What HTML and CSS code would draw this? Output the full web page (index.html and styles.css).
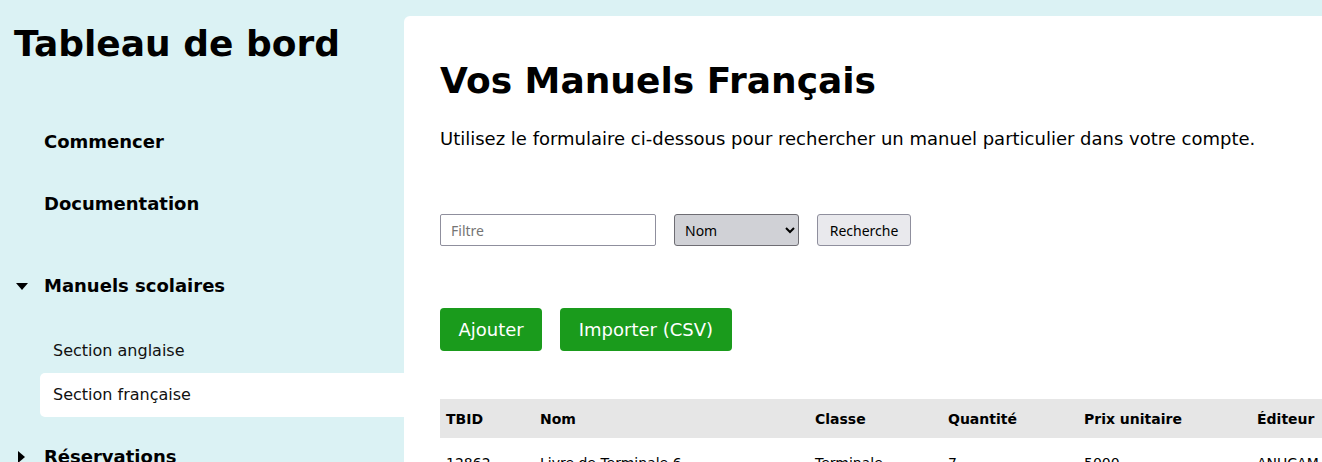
FILE: index.html
```html
<!DOCTYPE html>
<html lang="fr">
<head>
  <meta charset="UTF-8" />
  <title>Tableau de bord</title>
  <link rel="stylesheet" href="styles.css">
</head>
<body>

  <aside class="sidebar">
    <h1 class="brand">Tableau de bord</h1>
    <nav class="menu">
      <a class="menu-link" href="#">Commencer</a>
      <a class="menu-link" href="#">Documentation</a>

      <div class="menu-group">
        <a class="menu-link menu-toggle open" href="#"><span class="caret"></span>Manuels scolaires</a>
        <div class="submenu">
          <a class="submenu-link" href="#">Section anglaise</a>
          <a class="submenu-link active" href="#">Section française</a>
        </div>
      </div>

      <a class="menu-link menu-toggle closed" href="#"><span class="caret"></span>Réservations</a>
    </nav>
  </aside>

  <main class="content">
    <h1 class="title">Vos Manuels Français</h1>
    <p class="lead">Utilisez le formulaire ci-dessous pour rechercher un manuel particulier dans votre compte.</p>

    <form class="search">
      <input class="field" type="text" placeholder="Filtre">
      <select class="picker">
        <option>Nom</option>
        <option>Classe</option>
        <option>Éditeur</option>
      </select>
      <button class="btn-search" type="button">Recherche</button>
    </form>

    <div class="actions">
      <button class="btn-green" type="button">Ajouter</button>
      <button class="btn-green" type="button">Importer (CSV)</button>
    </div>

    <table class="books">
      <colgroup>
        <col style="width:94px">
        <col style="width:275px">
        <col style="width:133px">
        <col style="width:136px">
        <col style="width:173px">
        <col style="width:160px">
      </colgroup>
      <thead>
        <tr>
          <th>TBID</th>
          <th>Nom</th>
          <th>Classe</th>
          <th>Quantité</th>
          <th>Prix unitaire</th>
          <th>Éditeur</th>
        </tr>
      </thead>
      <tbody>
        <tr>
          <td>12862</td>
          <td>Livre de Terminale 6</td>
          <td>Terminale</td>
          <td>7</td>
          <td>5000</td>
          <td>ANUCAM</td>
        </tr>
      </tbody>
    </table>
  </main>

</body>
</html>
```

FILE: styles.css
```css
body {
  font-family: 'DejaVu Sans', sans-serif;
  background-color: #dbf2f4;
  color: #000;
  margin: 0;
  display: flex;
  height: 462px;
  overflow: hidden;
}

.sidebar {
  flex: none;
  width: 404px;
}
.brand {
  font-size: 36px;
  margin: 23px 0 0;
  padding-left: 14px;
}
.menu {
  margin-top: 47px;
}
.menu-link {
  display: flex;
  align-items: center;
  padding: 20px 0 20px 44px;
  line-height: 22px;
  font-size: 18px;
  font-weight: bold;
  color: #000;
  text-decoration: none;
  position: relative;
}
.menu-group {
  margin-top: 20px;
}
.caret {
  position: absolute;
  left: 16px;
  top: 50%;
  width: 0;
  height: 0;
}
.open .caret {
  margin-top: -3px;
  border-left: 6px solid transparent;
  border-right: 6px solid transparent;
  border-top: 7px solid #000;
}
.closed .caret {
  left: 18px;
  margin-top: -6px;
  border-top: 6px solid transparent;
  border-bottom: 6px solid transparent;
  border-left: 7px solid #000;
}
.submenu {
  margin: 12px 0 9px 40px;
}
.submenu-link {
  display: block;
  padding: 0 13px;
  height: 44px;
  line-height: 44px;
  font-size: 16px;
  color: #111;
  text-decoration: none;
  border-radius: 5px 0 0 5px;
}
.submenu-link.active {
  background-color: #fff;
}

.content {
  flex: 1;
  min-width: 0;
  margin-top: 16px;
  background-color: #fff;
  border-radius: 6px 0 0 0;
  padding: 20px 0 0 36px;
  overflow: hidden;
}
.title {
  font-size: 36px;
  margin: 24px 0 0;
}
.lead {
  font-size: 18px;
  margin: 27px 0 0;
}

.search {
  display: flex;
  gap: 18px;
  margin-top: 65px;
}
.field,
.picker,
.btn-search {
  font-family: 'Noto Sans', sans-serif;
  font-size: 14px;
  height: 32px;
  box-sizing: border-box;
  border-radius: 3px;
  margin: 0;
}
.field {
  width: 216px;
  border: 1px solid #8f8f9d;
  padding: 0 10px;
  border-radius: 2px;
}
.field::placeholder {
  color: #757575;
}
.picker {
  width: 125px;
  background-color: #d0d1d6;
  border: 1px solid #6e6d73;
  padding: 0 6px;
  color: #000;
}
.btn-search {
  width: 94px;
  background-color: #e9e9ed;
  border: 1px solid #8f8f9d;
  color: #000;
  padding: 0;
}

.actions {
  display: flex;
  gap: 18px;
  margin-top: 62px;
}
.btn-green {
  font-family: 'DejaVu Sans', sans-serif;
  font-size: 18px;
  height: 43px;
  padding: 0 18.5px;
  background-color: #1a9b1c;
  color: #fff;
  border: none;
  border-radius: 4px;
}

.books {
  margin-top: 48px;
  border-collapse: collapse;
  table-layout: fixed;
  width: 971px;
  font-size: 14px;
}
.books th {
  background-color: #e6e6e6;
  text-align: left;
  height: 39px;
  padding: 0 6px;
}
.books td {
  padding: 17px 6px 14px;
}
```
